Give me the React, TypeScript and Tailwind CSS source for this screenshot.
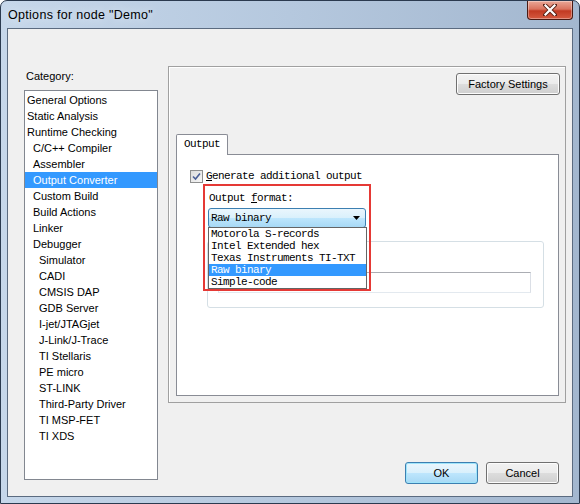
const categories: [string, number][] = [
  ['General Options', 0],
  ['Static Analysis', 0],
  ['Runtime Checking', 0],
  ['C/C++ Compiler', 1],
  ['Assembler', 1],
  ['Output Converter', 1],
  ['Custom Build', 1],
  ['Build Actions', 1],
  ['Linker', 1],
  ['Debugger', 1],
  ['Simulator', 2],
  ['CADI', 2],
  ['CMSIS DAP', 2],
  ['GDB Server', 2],
  ['I-jet/JTAGjet', 2],
  ['J-Link/J-Trace', 2],
  ['TI Stellaris', 2],
  ['PE micro', 2],
  ['ST-LINK', 2],
  ['Third-Party Driver', 2],
  ['TI MSP-FET', 2],
  ['TI XDS', 2],
];

const formats = ['Motorola S-records', 'Intel Extended hex', 'Texas Instruments TI-TXT', 'Raw binary', 'Simple-code'];

const indent = ['pl-[2px]', 'pl-[8px]', 'pl-[14px]'];

function CloseButton() {
  return (
    <div className="mr-[6px] w-[46px] h-[19px] flex items-center justify-center rounded-b-[4px] border border-t-0 border-[#4a1a12] bg-[linear-gradient(#e9a797,#d9735e_45%,#c23a22_55%,#d55a40)] shadow-[inset_0_0_0_1px_rgba(255,255,255,0.35)]">
      <svg width="14" height="12" viewBox="0 0 14 12">
        <path d="M2 1 L12 11 M12 1 L2 11" stroke="#5a2418" strokeWidth="4" strokeLinecap="square" />
        <path d="M2.5 1.5 L11.5 10.5 M11.5 1.5 L2.5 10.5" stroke="#ffffff" strokeWidth="2.2" strokeLinecap="square" />
      </svg>
    </div>
  );
}

function WinButton({ label, width, focused }: { label: string; width: string; focused?: boolean }) {
  return (
    <div
      className={`${width} h-[22px] flex items-center justify-center rounded-[3px] border text-[11px] text-black ${
        focused
          ? 'border-[#3c7fb1] bg-[linear-gradient(#eaf6fd,#d9f0fc_50%,#bee6fd_50%,#a7d9f5)] shadow-[inset_0_0_0_1px_#9fe5fb]'
          : 'border-[#707070] bg-[linear-gradient(#f2f2f2,#ebebeb_50%,#dddddd_50%,#cfcfcf)] shadow-[inset_0_0_0_1px_#fcfcfc]'
      }`}
    >
      {label}
    </div>
  );
}

export default function App() {
  return (
    <div className="w-[580px] h-[504px] bg-white">
      <div className="w-[580px] h-[504px] flex flex-col rounded-t-[7px] border border-[#2b3a4f] bg-[linear-gradient(90deg,#c6d7ea,#b5c8de_50%,#a3b7cf)] overflow-hidden font-['Liberation_Sans',sans-serif]">
        {/* Title bar */}
        <div className="h-[27px] flex items-start justify-between shrink-0">
          <span className="pl-[7px] pt-[7px] text-[12.5px] leading-[14px] tracking-[0.3px] text-black [text-shadow:0_0_8px_#e8f0f8]">
            Options for node "Demo"
          </span>
          <CloseButton />
        </div>

        {/* Client area */}
        <div className="flex-1 mx-[6px] mb-[6px] border border-[#5b6b80] bg-[#f0f0f0] flex">
          {/* Category column */}
          <div className="pl-[16px] pt-[41px] flex flex-col">
            <span className="text-[11px] leading-[12px] h-[12px] mb-[8px] pl-[2px]">Category:</span>
            <div className="w-[134px] h-[390px] border border-[#828790] bg-white pt-[1px] flex flex-col">
              {categories.map(([name, lvl]) => (
                <div
                  key={name}
                  className={`h-[16px] leading-[16px] text-[11px] ${indent[lvl]} ${
                    name === 'Output Converter' ? 'bg-[#3399ff] text-white' : 'text-black'
                  }`}
                >
                  {name}
                </div>
              ))}
            </div>
          </div>

          {/* Right column */}
          <div className="ml-[10px] pt-[37px] flex flex-col">
            <div className="w-[398px] h-[337px] border border-[#a0a0a0] shadow-[inset_1px_1px_0_#ffffff] flex flex-col">
              <div className="flex justify-end pt-[6px] pr-[5px]">
                <WinButton label="Factory Settings" width="w-[104px]" />
              </div>

              {/* Tab control */}
              <div className="ml-[7px] mt-[39px] w-[383px] flex flex-col">
                <div className="relative z-10 -mb-px w-[52px] h-[21px] border border-b-0 border-[#898c95] bg-white rounded-t-[2px] pl-[7px] pt-[3px] font-['Liberation_Mono',monospace] text-[11px] leading-[13px] tracking-[-0.6px]">
                  Output
                </div>
                <div className="relative h-[242px] border border-[#898c95] bg-white pl-[13px] pt-[15px] font-['Liberation_Mono',monospace] text-[11px] tracking-[-0.6px] text-black">
                  {/* Checkbox */}
                  <div className="flex items-center h-[13px]">
                    <div className="w-[13px] h-[13px] border border-[#8e8f8f] bg-[linear-gradient(135deg,#dcdcdc,#f6f6f6)] flex items-center justify-center">
                      <svg width="9" height="9" viewBox="0 0 9 9">
                        <path d="M1 4.5 L3.5 7 L8 1.5" fill="none" stroke="#4a5f97" strokeWidth="1.6" />
                      </svg>
                    </div>
                    <span className="ml-[3px] leading-[13px]">
                      <span className="underline">G</span>enerate additional output
                    </span>
                  </div>

                  <div className="ml-[19px] mt-[9px] leading-[12px] h-[12px]">
                    Output <span className="underline">f</span>ormat:
                  </div>

                  {/* Combo box with open list */}
                  <div className="relative ml-[18px] mt-[4px] w-[158px] h-[20px] rounded-[3px] border border-[#3c7fb1] bg-[linear-gradient(#eaf6fd,#d9f0fc_50%,#bee6fd_50%,#a7d9f5)] flex items-center justify-between pl-[2px] pr-[5px] z-20">
                    <span className="leading-[12px]">Raw binary</span>
                    <svg width="7" height="4" viewBox="0 0 7 4">
                      <path d="M0 0 L7 0 L3.5 4 Z" fill="#000" />
                    </svg>
                    <div className="absolute left-[-1px] top-[18px] w-[159px] border border-[#646464] bg-white flex flex-col">
                      {formats.map((f) => (
                        <div
                          key={f}
                          className={`h-[12px] leading-[12px] pl-[2px] ${f === 'Raw binary' ? 'bg-[#3399ff] text-white' : 'text-black'}`}
                        >
                          {f}
                        </div>
                      ))}
                    </div>
                  </div>

                  {/* Group box behind the list */}
                  <div className="ml-[17px] mt-[13px] w-[337px] h-[67px] rounded-[3px] border border-[#d5dfe5] pl-[10px] pt-[30px] pr-[12px]">
                    <div className="h-[21px] border border-[#abadb3] border-l-[#e2e3ea] border-r-[#dbdfe6] border-b-[#e3e9ef] bg-white" />
                  </div>

                  {/* Annotation frame */}
                  <div className="absolute left-[26px] top-[29px] w-[168px] h-[107px] border-2 border-[#e53935] z-30" />
                </div>
              </div>
            </div>

            <div className="mt-[59px] w-[398px] flex justify-end gap-[8px] pr-[7px]">
              <WinButton label="OK" width="w-[73px]" focused />
              <WinButton label="Cancel" width="w-[73px]" />
            </div>
          </div>
        </div>
      </div>
    </div>
  );
}
